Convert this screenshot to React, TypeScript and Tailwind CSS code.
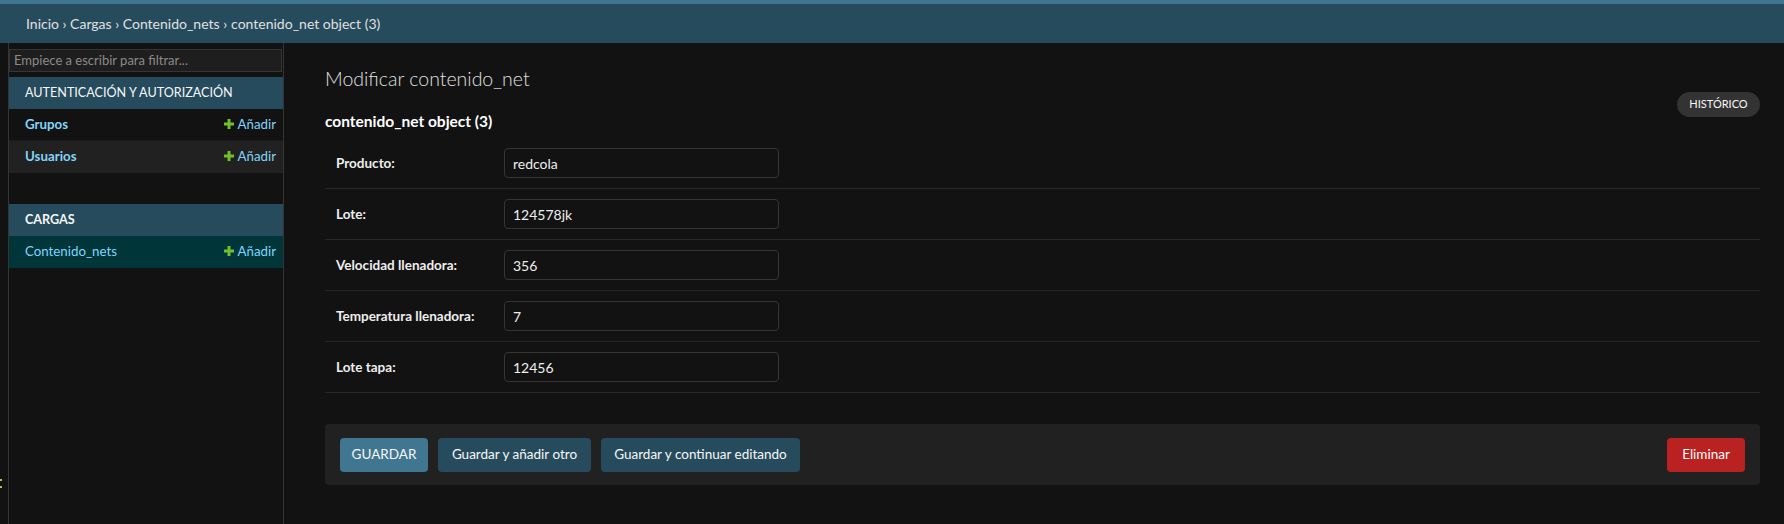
import React from "react";

const Plus = () => (
  <svg width="10" height="10" viewBox="0 0 10 10" className="mr-[4px] mb-[2px]">
    <rect x="3.5" y="0" width="3" height="10" fill="#70bf2b" />
    <rect x="0" y="3.5" width="10" height="3" fill="#70bf2b" />
  </svg>
);

function SideRow({ name, bg, bold }: { name: string; bg: string; bold?: boolean }) {
  return (
    <div className={`flex h-[32px] items-center justify-between pl-[16px] pr-[7px] text-[13.3px] ${bg}`}>
      <span className={`text-[#81d4fa] ${bold ? "font-bold" : ""}`}>{name}</span>
      <span className="flex items-center text-[#81d4fa]">
        <Plus />
        Añadir
      </span>
    </div>
  );
}

function SideHeader({ title, bold }: { title: string; bold?: boolean }) {
  return (
    <div className={`flex h-[32px] items-center bg-[#264b5d] pl-[16px] text-[12.6px] text-[#f7f7f7] ${bold ? "font-bold" : ""}`}>
      {title}
    </div>
  );
}

function FormRow({ label, value }: { label: string; value: string }) {
  return (
    <div className="flex h-[51px] items-center border-b border-[#272727] pl-[11px]">
      <label className="w-[168px] text-[13.5px] font-bold text-[#eeeeee]">{label}</label>
      <div className="flex h-[30px] w-[275px] items-center rounded-[4px] border border-[#353535] bg-[#121212] pl-[8px] text-[14px] text-[#eeeeee]">
        {value}
      </div>
    </div>
  );
}

export default function App() {
  return (
    <div className="flex min-h-[524px] flex-col bg-[#121212] font-['Lato','Liberation_Sans',sans-serif] text-[#eeeeee]">
      <div className="h-[4px] bg-[#417690]" />
      <div className="flex h-[39px] items-center bg-[#264b5d] px-[26px] text-[14px] text-[#e0e0e0]">
        Inicio › Cargas › Contenido_nets › <span className="ml-[4px] text-[#e0e0e0]">contenido_net object (3)</span>
      </div>
      <div className="flex flex-1">
        <div className="flex w-[9px] flex-col justify-end border-r border-[#353535] pb-[36px]">
          <svg width="2" height="9" viewBox="0 0 2 9">
            <rect x="0" y="0" width="2" height="2" fill="#b8b860" />
            <rect x="0" y="7" width="2" height="2" fill="#b8b860" />
          </svg>
        </div>
        <div className="w-[275px] border-r border-[#353535]">
          <div className="pt-[6px] pr-[1px]">
            <div className="flex h-[23px] items-center border border-[#353535] bg-[#1e1e1e] pl-[4px] text-[13px] text-[#8a8a8a]">
              Empiece a escribir para filtrar...
            </div>
          </div>
          <div className="mt-[5px]">
            <SideHeader title="AUTENTICACIÓN Y AUTORIZACIÓN" />
            <SideRow name="Grupos" bg="bg-[#121212] border-b border-[#1b1b1b]" bold />
            <SideRow name="Usuarios" bg="bg-[#212121]" bold />
          </div>
          <div className="mt-[31px]">
            <SideHeader title="CARGAS" bold />
            <SideRow name="Contenido_nets" bg="bg-[#00363a]" />
          </div>
        </div>
        <div className="flex-1 pl-[41px] pr-[24px] pt-[23px]">
          <h1 className="text-[19.5px] font-light leading-[26px] text-[#e0e0e0]">Modificar contenido_net</h1>
          <div className="flex items-start justify-between">
            <h2 className="mt-[19px] text-[15.5px] font-bold leading-[20px] text-[#ffffff]">contenido_net object (3)</h2>
            <div className="flex h-[25px] w-[83px] items-center justify-center rounded-full bg-[#333333] text-[11px] text-[#f7f7f7]">
              HISTÓRICO
            </div>
          </div>
          <div className="mt-[7px]">
            <FormRow label="Producto:" value="redcola" />
            <FormRow label="Lote:" value="124578jk" />
            <FormRow label="Velocidad llenadora:" value="356" />
            <FormRow label="Temperatura llenadora:" value="7" />
            <FormRow label="Lote tapa:" value="12456" />
          </div>
          <div className="mt-[31px] flex h-[61px] items-center justify-between rounded-[4px] bg-[#212121] px-[15px]">
            <div className="flex gap-[10px]">
              <div className="flex h-[34px] w-[88px] items-center justify-center rounded-[4px] bg-[#417690] text-[13.5px] text-[#f7f7f7]">
                GUARDAR
              </div>
              <div className="flex h-[34px] w-[153px] items-center justify-center rounded-[4px] bg-[#264b5d] text-[13.5px] text-[#f7f7f7]">
                Guardar y añadir otro
              </div>
              <div className="flex h-[34px] w-[199px] items-center justify-center rounded-[4px] bg-[#264b5d] text-[13.5px] text-[#f7f7f7]">
                Guardar y continuar editando
              </div>
            </div>
            <div className="flex h-[34px] w-[78px] items-center justify-center rounded-[4px] bg-[#ba2121] text-[13.5px] text-[#ffffff]">
              Eliminar
            </div>
          </div>
        </div>
      </div>
    </div>
  );
}
